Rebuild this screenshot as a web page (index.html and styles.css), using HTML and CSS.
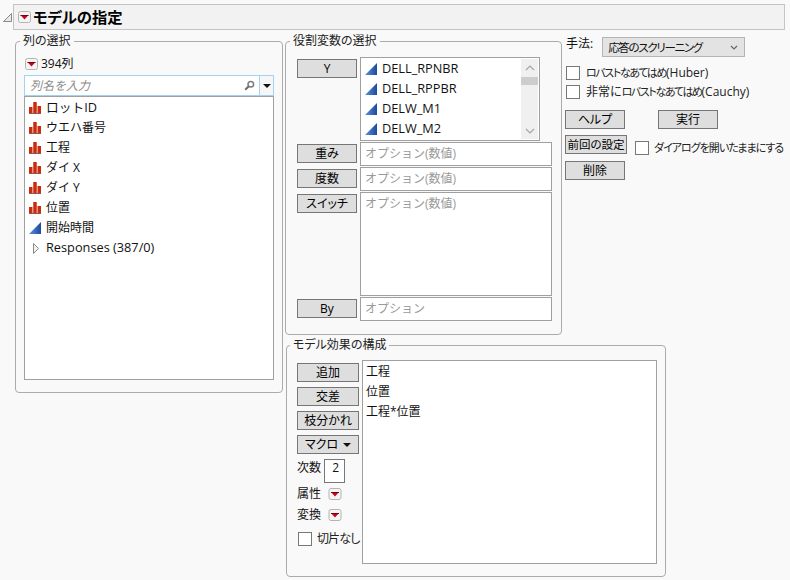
FILE: index.html
```html
<!DOCTYPE html>
<html lang="ja">
<head>
<meta charset="utf-8">
<title>モデルの指定</title>
<link rel="stylesheet" href="styles.css">
</head>
<body>
<svg class="defs" aria-hidden="true">
  <defs>
    <linearGradient id="cg" x1="0" y1="0" x2="1" y2="0">
      <stop offset="0" stop-color="#5f8fdc"/>
      <stop offset="1" stop-color="#1c4aa0"/>
    </linearGradient>
    <symbol id="nom" viewBox="0 0 12 12">
      <path d="M0 5h3.500v6H0zM4.250 0h3.500v11h-3.500zM8.500 4H12v7H8.500z" fill="#cc2a0c"/>
      <path d="M0 11h12v1H0z" fill="#8c5a50"/>
    </symbol>
    <symbol id="con" viewBox="0 0 12 12">
      <path d="M0 12 12 0v12z" fill="url(#cg)"/>
    </symbol>
    <symbol id="menu" viewBox="0 0 13 12">
      <rect x=".5" y=".5" width="12" height="11" rx="2" fill="#f4f4f4" stroke="#b4b4b4"/>
      <path d="M2.500 4h8L6.500 8.500z" fill="#c8001c"/>
      <path d="M2.500 4h8v1h-8z" fill="#7a0010"/>
    </symbol>
  </defs>
</svg>

<header class="head">
  <svg class="disclose" width="9" height="9" viewBox="0 0 9 9"><path d="M.5 8.500h8v-8z" fill="#e8e8e8" stroke="#8a8a8a"/></svg>
  <div class="titlebar">
    <svg class="menu" width="13" height="12"><use href="#menu"/></svg>
    <h1 class="title">モデルの指定</h1>
  </div>
</header>

<main class="main">
  <fieldset class="panel panel-cols">
    <legend class="legend">列の選択</legend>
    <div class="count">
      <svg class="menu" width="13" height="12"><use href="#menu"/></svg>
      <span>394列</span>
    </div>
    <div class="search">
      <span class="search-text">列名を入力</span>
      <svg class="lens" width="11" height="11" viewBox="0 0 11 11"><circle cx="6.800" cy="4.200" r="2.800" fill="none" stroke="#7c7c7c" stroke-width="1.500"/><path d="M4.800 6.200 1.200 9.800" stroke="#6c6c6c" stroke-width="2"/></svg>
      <span class="search-drop"><i class="tri"></i></span>
    </div>
    <ul class="collist">
      <li class="row"><svg class="ico" width="12" height="12"><use href="#nom"/></svg><span class="latin">ロットID</span></li>
      <li class="row"><svg class="ico" width="12" height="12"><use href="#nom"/></svg>ウエハ番号</li>
      <li class="row"><svg class="ico" width="12" height="12"><use href="#nom"/></svg>工程</li>
      <li class="row"><svg class="ico" width="12" height="12"><use href="#nom"/></svg>ダイ X</li>
      <li class="row"><svg class="ico" width="12" height="12"><use href="#nom"/></svg>ダイ Y</li>
      <li class="row"><svg class="ico" width="12" height="12"><use href="#nom"/></svg>位置</li>
      <li class="row"><svg class="ico" width="12" height="12"><use href="#con"/></svg>開始時間</li>
      <li class="row"><svg class="ico" width="12" height="12" viewBox="0 0 12 12"><path d="M4.500 1.500v10l5-5z" fill="#f2f2f2" stroke="#8a8a8a"/></svg><span class="latin">Responses (387/0)</span></li>
    </ul>
  </fieldset>

  <fieldset class="panel panel-roles">
    <legend class="legend">役割変数の選択</legend>
    <div class="roles">
      <button class="btn btn-role">Y</button>
      <div class="ylist">
        <ul class="ylist-rows">
          <li class="row"><svg class="ico" width="12" height="12"><use href="#con"/></svg><span class="latin">DELL_RPNBR</span></li>
          <li class="row"><svg class="ico" width="12" height="12"><use href="#con"/></svg><span class="latin">DELL_RPPBR</span></li>
          <li class="row"><svg class="ico" width="12" height="12"><use href="#con"/></svg><span class="latin">DELW_M1</span></li>
          <li class="row"><svg class="ico" width="12" height="12"><use href="#con"/></svg><span class="latin">DELW_M2</span></li>
        </ul>
        <div class="scroll">
          <svg width="10" height="6" viewBox="0 0 10 6"><path d="M1 5l4-4 4 4" fill="none" stroke="#a6a6a6" stroke-width="1.200"/></svg>
          <span class="thumb"></span>
          <svg class="scroll-down" width="10" height="6" viewBox="0 0 10 6"><path d="M1 1l4 4 4-4" fill="none" stroke="#a6a6a6" stroke-width="1.200"/></svg>
        </div>
      </div>
      <button class="btn btn-role">重み</button>
      <div class="field">オプション(数値)</div>
      <button class="btn btn-role">度数</button>
      <div class="field">オプション(数値)</div>
      <button class="btn btn-role">スイッチ</button>
      <div class="field field-tall">オプション(数値)</div>
      <button class="btn btn-role">By</button>
      <div class="field">オプション</div>
    </div>
  </fieldset>

  <section class="side">
    <div class="method">
      <span class="method-label">手法:</span>
      <div class="select">応答のスクリーニング
        <svg class="chev" width="8" height="5" viewBox="0 0 8 5"><path d="M1 1l3 3 3-3" fill="none" stroke="#666" stroke-width="1.200"/></svg>
      </div>
    </div>
    <label class="check check-first"><input class="box" type="checkbox"><span><span class="kana">ロバストなあてはめ</span>(Huber)</span></label>
    <label class="check check-second"><input class="box" type="checkbox"><span>非常に<span class="kana">ロバストなあてはめ</span>(Cauchy)</span></label>
    <div class="actions actions-help">
      <button class="btn btn-side">ヘルプ</button>
      <button class="btn btn-side btn-run">実行</button>
    </div>
    <div class="actions actions-recall">
      <button class="btn btn-recall">前回の設定</button>
      <label class="check check-keep"><input class="box" type="checkbox"><span class="kana kana-keep">ダイアログを開いたままにする</span></label>
    </div>
    <div class="actions actions-remove">
      <button class="btn btn-side">削除</button>
    </div>
  </section>

  <fieldset class="panel panel-effects">
    <legend class="legend">モデル効果の構成</legend>
    <div class="effects">
      <div class="tools">
        <button class="btn btn-tool">追加</button>
        <button class="btn btn-tool">交差</button>
        <button class="btn btn-tool">枝分かれ</button>
        <button class="btn btn-tool">マクロ<i class="tri tri-macro"></i></button>
        <div class="degree"><span>次数</span><span class="degree-box">2</span></div>
        <div class="attr attr-first"><span>属性</span><svg class="menu" width="14" height="12"><use href="#menu"/></svg></div>
        <div class="attr attr-second"><span>変換</span><svg class="menu" width="14" height="12"><use href="#menu"/></svg></div>
        <label class="check check-intercept"><input class="box" type="checkbox">切片なし</label>
      </div>
      <ul class="efflist">
        <li class="row">工程</li>
        <li class="row">位置</li>
        <li class="row">工程*位置</li>
      </ul>
    </div>
  </fieldset>
</main>
</body>
</html>
```

FILE: styles.css
```css
* { box-sizing: border-box; }

html, body {
  margin: 0;
  height: 100%;
}

body {
  width: 790px;
  height: 580px;
  overflow: hidden;
  background: #f9f9f9;
  color: #111;
  font: 12px/16px "Open Sans", "Noto Sans CJK JP", sans-serif;
}

ul { list-style: none; margin: 0; padding: 0; }

.defs { position: absolute; width: 0; height: 0; }

.head {
  display: flex;
  align-items: flex-end;
  padding: 4px 5px 0 3px;
}

.disclose { margin: 0 1px 8px 0; flex: none; }

.titlebar {
  flex: 1;
  height: 26px;
  display: flex;
  align-items: center;
  gap: 2px;
  padding-left: 4px;
  background: #f2f2f2;
  border: 1px solid #c4c4c4;
}

.menu { display: block; flex: none; }

.title {
  margin: 0;
  font-size: 15.300px;
  line-height: 20px;
  font-weight: 700;
  font-feature-settings: "palt";
  color: #000;
}

.main {
  display: grid;
  grid-template-columns: 270px 280px 1fr;
  grid-template-rows: auto auto;
  align-items: start;
  padding: 4px 0 0 15px;
}

.panel {
  margin: 0;
  min-width: 0;
  border: 1px solid #ababab;
  border-radius: 4px;
}

.legend {
  margin-left: -7px;
  padding: 0 3px;
  line-height: 14px;
  color: #222;
  font-feature-settings: "palt";
}

.panel-cols .legend { margin-left: -4px; }

.panel-cols {
  grid-row: 1 / span 2;
  width: 268px;
  height: 359px;
  padding: 9px 8px 0;
}

.count {
  display: flex;
  align-items: center;
  gap: 3px;
  height: 14px;
  padding-left: 1px;
}

.search {
  display: flex;
  align-items: center;
  width: 250px;
  height: 21px;
  margin-top: 4px;
  padding-left: 5px;
  background: #fff;
  border: 1px solid #a5d2ee;
}

.search-text { flex: 1; color: #8a8a8a; font-style: italic; }

.lens { margin-right: 4px; }

.search-drop {
  width: 14px;
  height: 100%;
  display: flex;
  align-items: center;
  justify-content: center;
  background: #f6f6f6;
  border-left: 1px solid #a5d2ee;
}

.tri {
  display: inline-block;
  width: 0;
  height: 0;
  border-left: 4px solid transparent;
  border-right: 4px solid transparent;
  border-top: 4px solid #111;
}

.collist {
  width: 250px;
  height: 284px;
  padding-top: 1px;
  background: #fff;
  border: 1px solid #a0a0a0;
}

.row {
  display: flex;
  align-items: center;
  height: 20px;
  padding-left: 4px;
  white-space: nowrap;
}

.latin { font-size: 12.750px; margin-bottom: 2px; }

.ico { flex: none; margin-right: 5px; }

.panel-roles {
  width: 277px;
  height: 301px;
  padding: 9px 0 0 11px;
}

.roles {
  display: grid;
  grid-template-columns: 60px 192px;
  column-gap: 3px;
  row-gap: 1px;
  align-items: start;
}

.btn {
  display: flex;
  align-items: center;
  justify-content: center;
  height: 19px;
  margin: 0;
  padding: 0;
  font: inherit;
  font-feature-settings: "palt";
  color: #000;
  background: #dedede;
  border: 1px solid #767676;
  white-space: nowrap;
}

.btn-role { width: 60px; margin-top: 2px; }

.ylist {
  display: flex;
  width: 180px;
  height: 84px;
  padding: 1px;
  background: #fff;
  border: 1px solid #a0a0a0;
}

.ylist-rows { flex: 1; }
.ylist-rows .row { padding-left: 3px; }

.scroll {
  width: 17px;
  display: flex;
  flex-direction: column;
  align-items: center;
  padding: 6px 0 5px;
  background: #f0f0f0;
}

.thumb {
  width: 17px;
  height: 8px;
  margin-top: 6px;
  background: #cdcdcd;
}

.scroll-down { margin-top: auto; }

.field {
  height: 24px;
  padding: 3px 0 0 4px;
  color: #9a9a9a;
  background: #fff;
  border: 1px solid #a0a0a0;
}

.field-tall { height: 104px; }

.side { padding-top: 3px; }

.method {
  display: flex;
  gap: 9px;
  padding-left: 1px;
}

.method-label { line-height: 13px; font-feature-settings: "palt"; }

.select {
  position: relative;
  width: 143px;
  height: 20px;
  padding: 2px 0 0 5px;
  font-size: 11.500px;
  letter-spacing: -1.300px;
  font-feature-settings: "palt";
  background: #e3e3e3;
  border: 1px solid #b4b4b4;
}

.chev { position: absolute; right: 6px; top: 7px; }

.check {
  display: flex;
  align-items: center;
  gap: 6px;
  height: 14px;
  white-space: nowrap;
  color: #222;
  font-feature-settings: "palt";
}

.kana { font-size: 11px; letter-spacing: -1.400px; }
.kana-keep { letter-spacing: -1px; }

.check-first { margin: 9px 0 0 1px; }
.check-second { margin: 5px 0 0 1px; }

.box {
  appearance: none;
  flex: none;
  width: 14px;
  height: 14px;
  margin: 0;
  background: #fff;
  border: 1px solid #777;
}

.actions { display: flex; }
.actions-help { margin-top: 11px; }
.actions-recall { margin-top: 6px; }
.actions-remove { margin-top: 6px; }

.btn-side { width: 60px; }
.btn-run { margin-left: 33px; }
.btn-recall { width: 62px; font-size: 11.500px; }
.check-keep { margin: 6px 0 0 8px; gap: 5px; }

.panel-effects {
  grid-column: 2 / span 2;
  width: 380px;
  height: 239px;
  margin: 3px 0 0 1px;
  padding: 8px 0 0 10px;
}

.effects { display: flex; gap: 3px; }

.tools {
  display: flex;
  flex-direction: column;
  width: 62px;
  padding-top: 3px;
}

.btn-tool { width: 62px; margin-bottom: 5px; }
.tri-macro { margin-left: 5px; }

.degree {
  display: flex;
  align-items: flex-start;
  gap: 3px;
}

.degree span:first-child { margin-top: 1px; }

.degree-box {
  width: 21px;
  height: 24px;
  padding-right: 5px;
  text-align: right;
  background: #fff;
  border: 1px solid #777;
}

.attr {
  display: flex;
  align-items: center;
  gap: 7px;
  height: 16px;
}

.attr-first { margin-top: 3px; }
.attr-second { margin-top: 5px; }

.check-intercept { margin: 9px 0 0 1px; gap: 5px; letter-spacing: -.900px; }

.efflist {
  width: 295px;
  height: 204px;
  padding-top: 1px;
  background: #fff;
  border: 1px solid #a0a0a0;
}

.efflist .row { padding-left: 3px; }
```
